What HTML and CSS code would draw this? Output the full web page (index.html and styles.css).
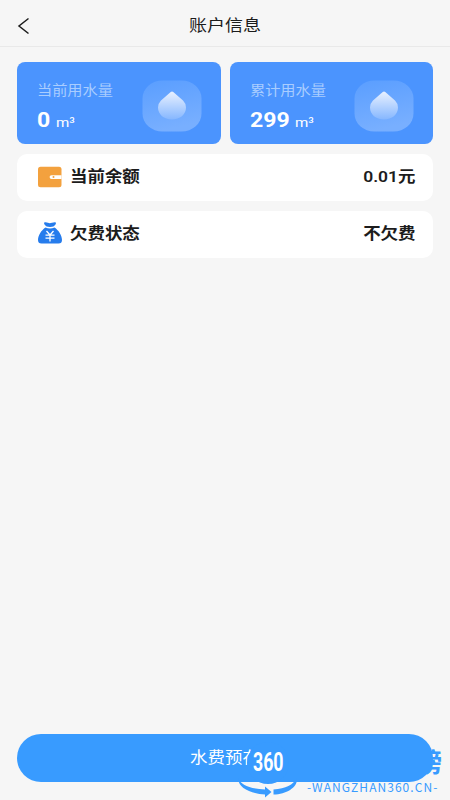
FILE: index.html
```html
<!DOCTYPE html>
<html lang="zh-CN">
<head>
<meta charset="utf-8">
<title>账户信息</title>
<link rel="stylesheet" href="styles.css">
</head>
<body>
<div class="screen">
  <header class="header">
    <svg class="back" width="14" height="18" viewBox="0 0 14 18"><path d="M11.500 1.500 2 9l9.500 7.500" fill="none" stroke="#1c1c1c" stroke-width="1.500"/></svg>
    <h1 class="title"><span class="wide">账户信息</span></h1>
  </header>
  <main class="content">
    <section class="cards">
      <div class="card">
        <div class="info">
          <div class="label"><span class="wide">当前用水量</span></div>
          <div class="value"><b class="wide">0</b><span class="unit"><span class="wide">m³</span></span></div>
        </div>
        <svg class="drop" width="60" height="52" viewBox="0 0 60 52">
          <defs>
            <linearGradient id="tile" x1="0" y1="0" x2=".25" y2="1"><stop offset="0" stop-color="#5a9eff"/><stop offset="1" stop-color="#78afff"/></linearGradient>
            <linearGradient id="water" x1="0" y1="0" x2="0" y2="1"><stop offset="0" stop-color="#e9f1ff"/><stop offset="1" stop-color="#86b7ff"/></linearGradient>
          </defs>
          <rect x=".5" y=".5" width="59" height="51" rx="20" ry="18" fill="url(#tile)"/>
          <path d="M30 11.500Q31 11.500 33 13.500L41 20.500Q44 23.500 44 27.500C44 34.500 38 39.500 30 39.500S16 34.500 16 27.500Q16 23.500 19 20.500L27 13.500Q29 11.500 30 11.500Z" fill="url(#water)"/>
        </svg>
      </div>
      <div class="card">
        <div class="info">
          <div class="label"><span class="wide">累计用水量</span></div>
          <div class="value"><b class="wide total">299</b><span class="unit"><span class="wide">m³</span></span></div>
        </div>
        <svg class="drop" width="60" height="52" viewBox="0 0 60 52">
          <rect x=".5" y=".5" width="59" height="51" rx="20" ry="18" fill="url(#tile)"/>
          <path d="M30 11.500Q31 11.500 33 13.500L41 20.500Q44 23.500 44 27.500C44 34.500 38 39.500 30 39.500S16 34.500 16 27.500Q16 23.500 19 20.500L27 13.500Q29 11.500 30 11.500Z" fill="url(#water)"/>
        </svg>
      </div>
    </section>
    <div class="row">
      <svg class="icon" width="24" height="22" viewBox="0 0 24 22"><rect x="0" y=".8" width="23.500" height="20.400" rx="2.500" fill="#f3a13e"/><path d="M23.500 9.200H13.500a1.900 1.900 0 0 0 0 3.800H23.500Z" fill="#fff"/><circle cx="15.500" cy="11.100" r="1" fill="#f3a13e"/></svg>
      <span class="name"><span class="wide">当前余额</span></span>
      <span class="amount"><span class="wide">0.01元</span></span>
    </div>
    <div class="row">
      <svg class="icon" width="24" height="22" viewBox="0 0 24 22"><path d="M6.500 .3Q8.500 0 10 .8T14 .8Q16 0 17.500 .3Q18.500 1 17.500 2.500Q16 5 12 5T6.500 2.500Q5.500 1 6.500 .3Z" fill="#267cec"/><path d="M7.500 5.500Q12 7.500 16.500 5.500C20.500 8 24 13.500 24 18Q24 21.500 20.500 21.500H3.500Q0 21.500 0 18C0 13.500 3.500 8 7.500 5.500Z" fill="#267cec"/><path d="M8.500 9 12 13 15.500 9M7.500 13.200H16.500M7.500 16.200H16.500M12 13V19.500" fill="none" stroke="#fff" stroke-width="1.300"/></svg>
      <span class="name"><span class="wide">欠费状态</span></span>
      <span class="amount"><span class="wide">不欠费</span></span>
    </div>
  </main>
  <footer class="footer"><button class="pay"><span class="wide">水费预存</span></button></footer>
  <div class="mark">
    <svg class="globe" width="64" height="60" viewBox="0 0 64 60"><circle cx="32" cy="23" r="21" fill="#389bff"/><path d="M2.500 38C4 45 15 49 29 49.500V46.500L35.500 52 29 57.500V54.500C14 53.500 1 47 2.500 38ZM37.500 54.500V49.500C50 48.500 57 45 61 38 62 47 51 54 37.500 54.500Z" fill="#389bff"/></svg>
    <span class="num">360</span>
    <span class="bang">榜</span>
    <span class="site">-WANGZHAN360.CN-</span>
  </div>
</div>
</body>
</html>
```
FILE: styles.css
```css
* { box-sizing: border-box; }
body { margin: 0; font-family: Roboto, "Noto Sans CJK SC", sans-serif; background: #f6f6f6; color: #1c1c1c; }
.screen { position: relative; height: 800px; display: flex; flex-direction: column; overflow: hidden; }
.wide { display: inline-block; transform: scaleX(1.125); transform-origin: left; }
.header { height: 47px; flex: none; display: flex; align-items: center; padding: 5px 0 0 17px; border-bottom: 1px solid #e9e9e9; }
.title { flex: 1; margin: 0 31px 0 0; text-align: center; font-size: 16px; line-height: 24px; font-weight: 400; }
.title .wide { transform-origin: center; }
.content { flex: 1; padding: 15px 17px 0 17.400px; }
.cards { display: grid; grid-template-columns: 203.500px 203.500px; justify-content: space-between; margin-bottom: 10px; }
.card { height: 82px; border-radius: 8px; background: #4b94fe; display: flex; justify-content: space-between; padding: 18px 19px 0 20px; color: #fff; }
.label { font-size: 13.500px; line-height: 20px; color: #a9cdff; white-space: nowrap; }
.value { display: flex; align-items: baseline; line-height: 26px; margin-top: 7px; }
.value b { font-size: 20.500px; min-width: 11px; }
.unit { font-size: 13.500px; margin-left: 7px; }
.total + .unit { margin-left: 10px; }
.row { height: 47px; border-radius: 10px; background: #fff; display: flex; align-items: center; padding: 0 17.500px 2px 20.500px; margin-bottom: 9.500px; font-size: 15.500px; line-height: 22px; font-weight: 600; }
.name { margin-left: 8px; flex: 1; position: relative; top: .7px; }
.amount { position: relative; top: .7px; }
.amount .wide { transform-origin: right; }
.footer { padding: 0 17px 18px; }
.pay { display: block; width: 100%; height: 48px; border: 0; border-radius: 24px; padding: 0 0 4px; background: #389bff; color: #fff; font: 15.500px Roboto, "Noto Sans CJK SC", sans-serif; }
.pay .wide { transform-origin: center; }
.mark { position: absolute; right: 0; bottom: 0; width: 214px; height: 60px; color: #389bff; }
.globe { position: absolute; left: 0; top: 0; }
.num { position: absolute; left: 17px; top: 11px; font: 700 25px/24px Roboto, sans-serif; color: #fff; transform: scaleX(.71); transform-origin: left; }
.bang { position: absolute; right: 8px; top: 5px; font: 700 26px/32px "Noto Sans CJK SC", sans-serif; }
.site { position: absolute; left: 71px; top: 39px; font: 12px/16px "Noto Sans CJK SC", sans-serif; letter-spacing: 1.050px; white-space: nowrap; }
```
